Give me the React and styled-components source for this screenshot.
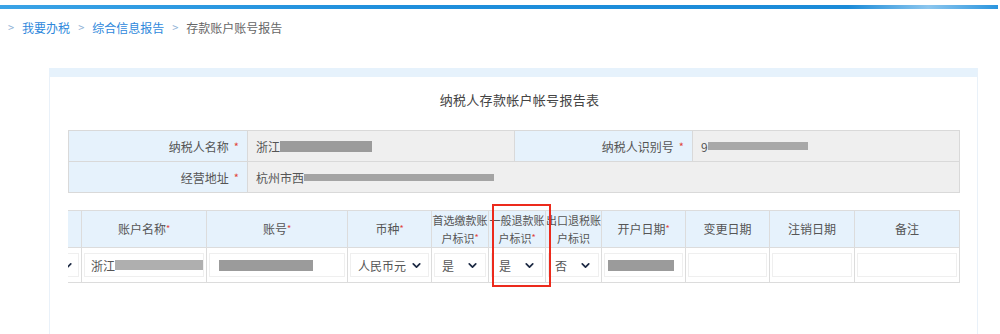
import React from 'react'
import styled, { createGlobalStyle } from 'styled-components'
import { ChevronDown } from 'lucide-react'

const GlobalStyle = createGlobalStyle`
  html, body {
    margin: 0;
    padding: 0;
    background: #fff;
  }
  body {
    font-family: "Microsoft YaHei", "Noto Sans CJK SC", "Noto Sans", sans-serif;
    font-size: 12px;
    color: #555;
  }
`

const Page = styled.div`
  width: 1000px;
  height: 334px;
  overflow: hidden;
  padding-top: 5px;
  box-sizing: border-box;
`

const TopStripe = styled.div`
  height: 4px;
  width: 998px;
  background: linear-gradient(to right, #3aa3e6 0%, #1f8fdc 40%, #1b8bd8 85%, #8cc6ee 93%, #2a95de 100%);
`

const Crumbs = styled.div`
  display: flex;
  align-items: center;
  height: 20px;
  margin-top: 8px;
  padding-left: 8px;
`

const CrumbSep = styled.span`
  color: #8fb2d6;
  font-size: 11px;
  margin: 0 8px 0 0;
  &:not(:first-child) {
    margin-left: 8px;
  }
`

const Crumb = styled.span`
  color: ${p => (p.$current ? '#666' : '#2e88dc')};
  font-size: 12px;
`

const Panel = styled.div`
  margin: 31px 0 0 49px;
  width: 929px;
  height: 270px;
  box-sizing: border-box;
  border-left: 1px solid #e9f1f9;
  border-right: 1px solid #e9f1f9;
  border-top: 9px solid #e6f2fc;
  padding: 0 18px;
`

const Title = styled.div`
  height: 45px;
  margin-bottom: 8px;
  display: flex;
  align-items: center;
  justify-content: center;
  padding-left: 12px;
  font-size: 13px;
  color: #444;
  letter-spacing: 0.3px;
`

const InfoGrid = styled.div`
  display: grid;
  grid-template-columns: 179px 267px 178px 1fr;
  border: 1px solid #d9d9d9;
  width: 892px;
  box-sizing: border-box;
`

const Label = styled.div`
  height: 30px;
  background: #e6f2fc;
  display: flex;
  align-items: center;
  justify-content: flex-end;
  padding-right: 8px;
  color: #555;
  border-right: 1px solid #d9d9d9;
  border-bottom: ${p => (p.$last ? 'none' : '1px solid #d9d9d9')};
`

const Value = styled.div`
  height: 30px;
  background: #efefef;
  display: flex;
  align-items: center;
  padding-left: 8px;
  color: #555;
  grid-column: ${p => (p.$span ? 'span 3' : 'auto')};
  border-right: ${p => (p.$end ? 'none' : '1px solid #d9d9d9')};
  border-bottom: ${p => (p.$last ? 'none' : '1px solid #d9d9d9')};
`

const Star = styled.span`
  color: #e0443a;
  margin-left: 5px;
  font-size: 11px;
`

const HeadStar = styled.span`
  color: #e0443a;
  font-size: 9px;
  vertical-align: top;
`

const Redact = styled.span`
  display: inline-block;
  flex-shrink: 0;
  width: ${p => p.$w}px;
  height: ${p => p.$h || 10}px;
  background: #9b9b9b;
  opacity: ${p => p.$o || 1};
`

const TableWrap = styled.div`
  position: relative;
  margin-top: 17px;
  width: 892px;
`

const Scroller = styled.div`
  overflow: hidden;
  width: 892px;
`

const Table = styled.table`
  border-collapse: collapse;
  table-layout: fixed;
  margin-left: -47px;
  width: 938px;
`

const Th = styled.th`
  height: 36px;
  background: #e6f2fc;
  border: 1px solid #dcdcdc;
  font-weight: normal;
  color: #555;
  font-size: ${p => (p.$tight ? '11px' : '12px')};
  line-height: 18px;
  padding: 0;
  text-align: center;
  white-space: nowrap;
`

const Td = styled.td`
  height: 30px;
  border: 1px solid #dcdcdc;
  padding: 2px;
  background: #fff;
`

const Field = styled.div`
  height: 24px;
  border: 1px solid #efefef;
  display: flex;
  align-items: center;
  justify-content: ${p => (p.$start ? 'flex-start' : 'space-between')};
  padding: 0 ${p => p.$pr ?? 6}px 0 ${p => p.$pl ?? 6}px;
  color: #555;
  font-size: 12px;
  box-sizing: border-box;
  overflow: hidden;
  white-space: nowrap;
  svg {
    flex-shrink: 0;
  }
`

const Highlight = styled.div`
  position: absolute;
  left: 424px;
  top: -6px;
  width: 59px;
  height: 83px;
  border: 2px solid #ec2a1c;
  box-sizing: border-box;
  pointer-events: none;
`

const Select = ({ text, pl, pr }) => (
  <Field $pl={pl} $pr={pr}>
    <span>{text}</span>
    <ChevronDown size={13} strokeWidth={3.2} color="#1d2a44" />
  </Field>
)

const columns = [
  { w: 60, title: '' },
  { w: 125, title: '账户名称', req: true },
  { w: 141, title: '账号', req: true },
  { w: 84, title: '币种', req: true },
  { w: 57, title: ['首选缴款账', '户标识'], req: true },
  { w: 57, title: ['一般退款账', '户标识'], req: true },
  { w: 56, title: ['出口退税账', '户标识'] },
  { w: 84, title: '开户日期', req: true },
  { w: 84, title: '变更日期' },
  { w: 85, title: '注销日期' },
  { w: 105, title: '备注' },
]

export default function App() {
  return (
    <Page>
      <GlobalStyle />
      <TopStripe />
      <Crumbs>
        <CrumbSep>&gt;</CrumbSep>
        <Crumb>我要办税</Crumb>
        <CrumbSep>&gt;</CrumbSep>
        <Crumb>综合信息报告</Crumb>
        <CrumbSep>&gt;</CrumbSep>
        <Crumb $current>存款账户账号报告</Crumb>
      </Crumbs>

      <Panel>
        <Title>纳税人存款帐户帐号报告表</Title>

        <InfoGrid>
          <Label>纳税人名称<Star>*</Star></Label>
          <Value>浙江<Redact $w={92} $h={11} /></Value>
          <Label>纳税人识别号<Star>*</Star></Label>
          <Value $end>9<Redact $w={100} $h={8} $o={0.85} /></Value>
          <Label $last>经营地址<Star>*</Star></Label>
          <Value $span $end $last>杭州市西<Redact $w={190} $h={7} $o={0.9} /></Value>
        </InfoGrid>

        <TableWrap>
          <Scroller>
            <Table>
              <colgroup>
                {columns.map((c, i) => <col key={i} style={{ width: c.w }} />)}
              </colgroup>
              <thead>
                <tr>
                  {columns.map((c, i) => (
                    <Th key={i} $tight={Array.isArray(c.title)}>
                      {Array.isArray(c.title) ? (
                        <>
                          {c.title[0]}
                          <br />
                          {c.title[1]}
                          {c.req && <HeadStar>*</HeadStar>}
                        </>
                      ) : (
                        <>
                          {c.title}
                          {c.req && <HeadStar>*</HeadStar>}
                        </>
                      )}
                    </Th>
                  ))}
                </tr>
              </thead>
              <tbody>
                <tr>
                  <Td><Select text="" pr={4} /></Td>
                  <Td><Field $pl={6} $start>浙江<Redact $w={92} $h={10} $o={0.8} /></Field></Td>
                  <Td><Field $pl={9} $start><Redact $w={94} $h={11} /></Field></Td>
                  <Td><Select text="人民币元" pl={7} pr={5} /></Td>
                  <Td><Select text="是" pl={7} pr={6} /></Td>
                  <Td><Select text="是" pl={7} pr={6} /></Td>
                  <Td><Select text="否" pl={6} pr={6} /></Td>
                  <Td><Field $pl={3} $start><Redact $w={66} $h={11} /></Field></Td>
                  <Td><Field /></Td>
                  <Td><Field /></Td>
                  <Td><Field /></Td>
                </tr>
              </tbody>
            </Table>
          </Scroller>
          <Highlight />
        </TableWrap>
      </Panel>
    </Page>
  )
}
